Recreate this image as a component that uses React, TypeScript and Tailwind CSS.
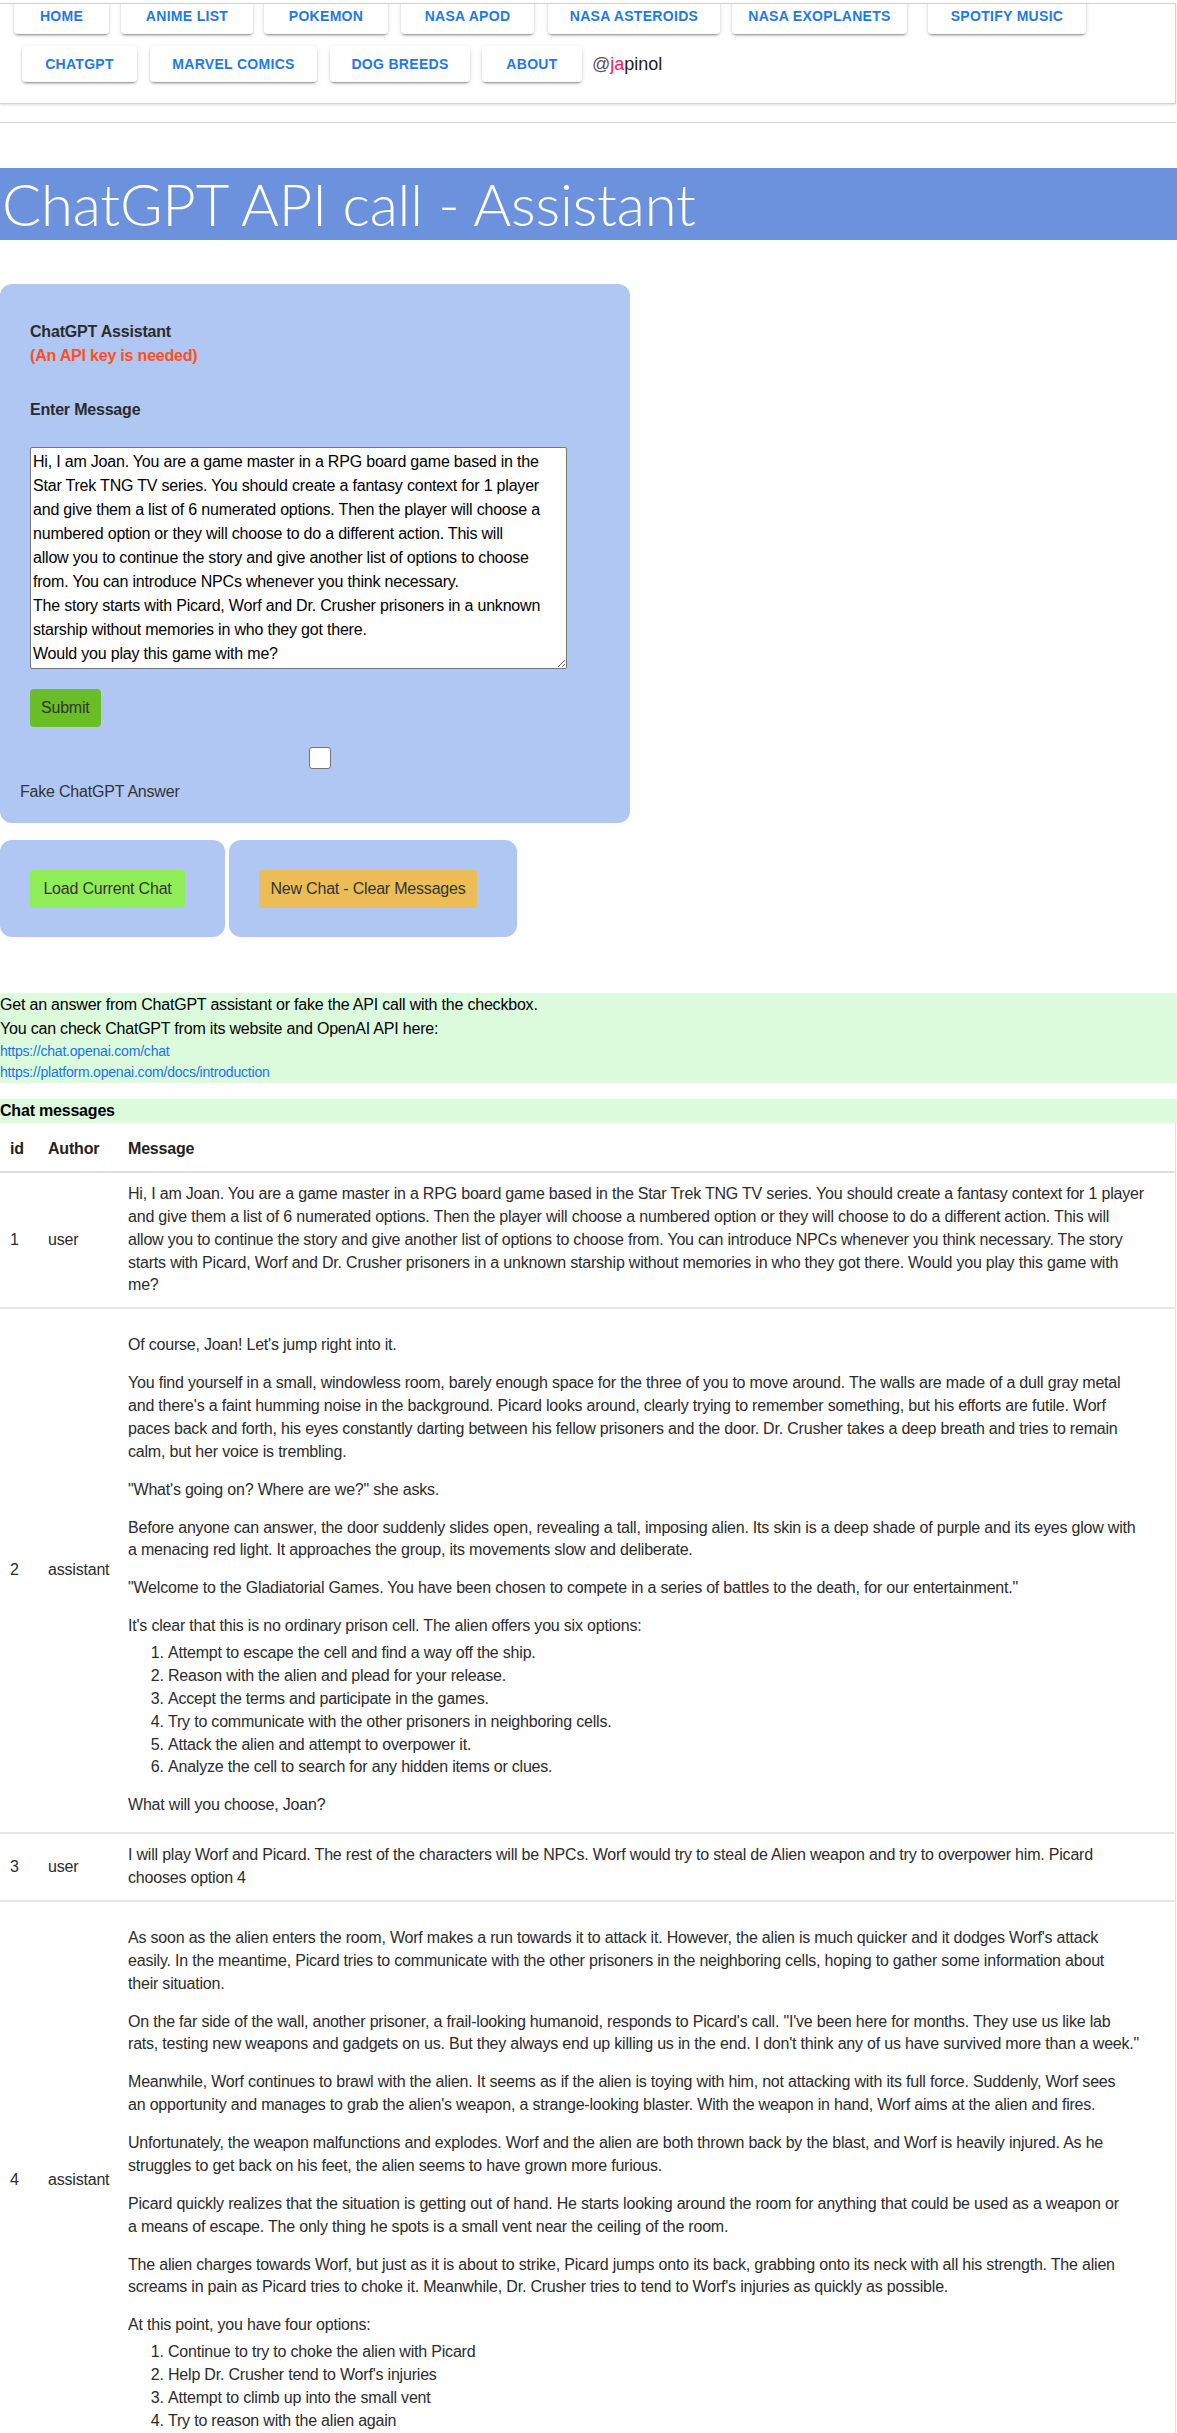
import React from "react";

const NAV_BTN =
  "h-[36px] shrink-0 flex items-center justify-center rounded-[4px] bg-white text-[14px] font-semibold uppercase tracking-[0.3px] text-[#1f7ae0] shadow-[0_3px_1px_-2px_rgba(0,0,0,0.2),0_2px_2px_0_rgba(0,0,0,0.14),0_1px_5px_0_rgba(0,0,0,0.12)]";

function NavBtn({ label, cls }: { label: string; cls: string }) {
  return <div className={`${NAV_BTN} ${cls}`}>{label}</div>;
}

const TEXTAREA_VALUE = [
  "Hi, I am Joan. You are a game master in a RPG board game based in the",
  "Star Trek TNG TV series. You should create a fantasy context for 1 player",
  "and give them a list of 6 numerated options. Then the player will choose a",
  "numbered option or they will choose to do a different action. This will",
  "allow you to continue the story and give another list of options to choose",
  "from. You can introduce NPCs whenever you think necessary.",
  "The story starts with Picard, Worf and Dr. Crusher prisoners in a unknown",
  "starship without memories in who they got there.",
  "Would you play this game with me?",
].join("\n");

type Block = { p: string[] } | { ol: string[] };

const row1 = [
  "Hi, I am Joan. You are a game master in a RPG board game based in the Star Trek TNG TV series. You should create a fantasy context for 1 player",
  "and give them a list of 6 numerated options. Then the player will choose a numbered option or they will choose to do a different action. This will",
  "allow you to continue the story and give another list of options to choose from. You can introduce NPCs whenever you think necessary. The story",
  "starts with Picard, Worf and Dr. Crusher prisoners in a unknown starship without memories in who they got there. Would you play this game with",
  "me?",
];

const row2: Block[] = [
  { p: ["Of course, Joan! Let's jump right into it."] },
  {
    p: [
      "You find yourself in a small, windowless room, barely enough space for the three of you to move around. The walls are made of a dull gray metal",
      "and there's a faint humming noise in the background. Picard looks around, clearly trying to remember something, but his efforts are futile. Worf",
      "paces back and forth, his eyes constantly darting between his fellow prisoners and the door. Dr. Crusher takes a deep breath and tries to remain",
      "calm, but her voice is trembling.",
    ],
  },
  { p: ["\"What's going on? Where are we?\" she asks."] },
  {
    p: [
      "Before anyone can answer, the door suddenly slides open, revealing a tall, imposing alien. Its skin is a deep shade of purple and its eyes glow with",
      "a menacing red light. It approaches the group, its movements slow and deliberate.",
    ],
  },
  {
    p: [
      "\"Welcome to the Gladiatorial Games. You have been chosen to compete in a series of battles to the death, for our entertainment.\"",
    ],
  },
  { p: ["It's clear that this is no ordinary prison cell. The alien offers you six options:"] },
  {
    ol: [
      "Attempt to escape the cell and find a way off the ship.",
      "Reason with the alien and plead for your release.",
      "Accept the terms and participate in the games.",
      "Try to communicate with the other prisoners in neighboring cells.",
      "Attack the alien and attempt to overpower it.",
      "Analyze the cell to search for any hidden items or clues.",
    ],
  },
  { p: ["What will you choose, Joan?"] },
];

const row3 = [
  "I will play Worf and Picard. The rest of the characters will be NPCs. Worf would try to steal de Alien weapon and try to overpower him. Picard",
  "chooses option 4",
];

const row4: Block[] = [
  {
    p: [
      "As soon as the alien enters the room, Worf makes a run towards it to attack it. However, the alien is much quicker and it dodges Worf's attack",
      "easily. In the meantime, Picard tries to communicate with the other prisoners in the neighboring cells, hoping to gather some information about",
      "their situation.",
    ],
  },
  {
    p: [
      "On the far side of the wall, another prisoner, a frail-looking humanoid, responds to Picard's call. \"I've been here for months. They use us like lab",
      "rats, testing new weapons and gadgets on us. But they always end up killing us in the end. I don't think any of us have survived more than a week.\"",
    ],
  },
  {
    p: [
      "Meanwhile, Worf continues to brawl with the alien. It seems as if the alien is toying with him, not attacking with its full force. Suddenly, Worf sees",
      "an opportunity and manages to grab the alien's weapon, a strange-looking blaster. With the weapon in hand, Worf aims at the alien and fires.",
    ],
  },
  {
    p: [
      "Unfortunately, the weapon malfunctions and explodes. Worf and the alien are both thrown back by the blast, and Worf is heavily injured. As he",
      "struggles to get back on his feet, the alien seems to have grown more furious.",
    ],
  },
  {
    p: [
      "Picard quickly realizes that the situation is getting out of hand. He starts looking around the room for anything that could be used as a weapon or",
      "a means of escape. The only thing he spots is a small vent near the ceiling of the room.",
    ],
  },
  {
    p: [
      "The alien charges towards Worf, but just as it is about to strike, Picard jumps onto its back, grabbing onto its neck with all his strength. The alien",
      "screams in pain as Picard tries to choke it. Meanwhile, Dr. Crusher tries to tend to Worf's injuries as quickly as possible.",
    ],
  },
  { p: ["At this point, you have four options:"] },
  {
    ol: [
      "Continue to try to choke the alien with Picard",
      "Help Dr. Crusher tend to Worf's injuries",
      "Attempt to climb up into the small vent",
      "Try to reason with the alien again",
    ],
  },
];

function Lines({ lines }: { lines: string[] }) {
  return (
    <>
      {lines.map((l, i) => (
        <span key={i} className="block whitespace-nowrap">
          {l}
        </span>
      ))}
    </>
  );
}

function Blocks({ blocks }: { blocks: Block[] }) {
  return (
    <div className="pt-[15px]">
      {blocks.map((b, i) => {
        const last = i === blocks.length - 1;
        if ("p" in b) {
          return (
            <p key={i} className={`${i > 0 ? "mt-[15px]" : ""} ${last ? "mb-[5px]" : ""}`}>
              <Lines lines={b.p} />
            </p>
          );
        }
        return (
          <ol key={i} className={`list-decimal pl-[40px] mt-[4px] ${last ? "mb-[16px]" : ""}`}>
            {b.ol.map((li, j) => (
              <li key={j}>{li}</li>
            ))}
          </ol>
        );
      })}
    </div>
  );
}

const TD = "px-[10px] py-[10px] align-middle";

export default function App() {
  return (
    <div className="w-[1177px] bg-white text-[16px] text-[#222] font-['Segoe_UI','Liberation_Sans',Arial,sans-serif] tracking-[-0.2px]">
      {/* top nav */}
      <div className="h-[3px]" />
      <div className="h-[101px] overflow-hidden border-t border-b border-r border-[#d2d2d2] shadow-[0_1px_2px_rgba(0,0,0,0.12)] w-[1176px]">
        <div className="flex -mt-[6px] pl-[14px]">
          <NavBtn label="Home" cls="w-[95px]" />
          <NavBtn label="Anime List" cls="w-[132px] ml-[12px]" />
          <NavBtn label="Pokemon" cls="w-[124px] ml-[11px]" />
          <NavBtn label="Nasa Apod" cls="w-[133px] ml-[13px]" />
          <NavBtn label="Nasa Asteroids" cls="w-[172px] ml-[14px]" />
          <NavBtn label="Nasa Exoplanets" cls="w-[175px] ml-[12px]" />
          <NavBtn label="Spotify Music" cls="w-[158px] ml-[21px]" />
        </div>
        <div className="flex items-center mt-[12px] pl-[22px]">
          <NavBtn label="ChatGPT" cls="w-[115px]" />
          <NavBtn label="Marvel Comics" cls="w-[167px] ml-[13px]" />
          <NavBtn label="Dog Breeds" cls="w-[140px] ml-[13px]" />
          <NavBtn label="About" cls="w-[100px] ml-[12px]" />
          <span className="ml-[10px] text-[18px] tracking-normal text-[#222]">
            <span className="text-[#555]">@</span>
            <span className="text-[#e8245a]">ja</span>
            pinol
          </span>
        </div>
      </div>
      <div className="mt-[18px] border-t border-[#d2d2d2] w-[1176px]" />

      {/* title */}
      <h1 className="mt-[45px] h-[72px] bg-[#6d92dd] text-white pl-[2px] font-['Lato','Roboto',sans-serif] font-light text-[58px] leading-[72px] tracking-[-0.2px] whitespace-nowrap overflow-hidden">
        ChatGPT API call - Assistant
      </h1>

      {/* form panel */}
      <div className="mt-[44px] w-[630px] h-[539px] rounded-[12px] bg-[#b0c7f4] pl-[30px] pt-[36px] leading-[24px]">
        <div className="font-bold text-[#2b2b2b]">ChatGPT Assistant</div>
        <div className="font-bold text-[#ff4f1f]">(An API key is needed)</div>
        <div className="mt-[30px] font-bold text-[#2b2b2b]">Enter Message</div>
        <textarea
          defaultValue={TEXTAREA_VALUE}
          wrap="off"
          spellCheck={false}
          className="mt-[25px] block w-[537px] h-[222px] bg-white border border-[#767676] rounded-[2px] px-[2px] py-[2px] text-[16px] leading-[24px] text-black whitespace-pre overflow-hidden resize-y"
        />
        <button className="mt-[20px] block h-[38px] px-[11px] rounded-[4px] bg-[#69bd27] text-[#333]">
          Submit
        </button>
        <input
          type="checkbox"
          className="mt-[20px] ml-[279px] block appearance-none w-[22px] h-[22px] bg-white border border-[#767676] rounded-[3px]"
        />
        <div className="mt-[11px] -ml-[10px] text-[#333]">Fake ChatGPT Answer</div>
      </div>

      {/* second row */}
      <div className="mt-[17px] flex gap-[4px]">
        <div className="w-[225px] h-[97px] rounded-[12px] bg-[#b0c7f4] pl-[30px] pt-[30px]">
          <button className="h-[38px] w-[155px] rounded-[4px] bg-[#8fee57] text-[#333]">
            Load Current Chat
          </button>
        </div>
        <div className="w-[288px] h-[97px] rounded-[12px] bg-[#b0c7f4] pl-[30px] pt-[30px]">
          <button className="h-[38px] w-[218px] rounded-[4px] bg-[#ecbd56] text-[#333]">
            New Chat - Clear Messages
          </button>
        </div>
      </div>

      {/* info */}
      <div className="mt-[56px] bg-[#dcfbdc] text-black">
        <div className="leading-[24px]">Get an answer from ChatGPT assistant or fake the API call with the checkbox.</div>
        <div className="leading-[24px]">You can check ChatGPT from its website and OpenAI API here:</div>
        <div className="text-[14px] leading-[21px] text-[#1a73e8]">https://chat.openai.com/chat</div>
        <div className="text-[14px] leading-[21px] text-[#1a73e8]">https://platform.openai.com/docs/introduction</div>
      </div>

      <div className="mt-[16px] bg-[#dcfbdc] font-bold text-black leading-[24px]">Chat messages</div>

      {/* table */}
      <table className="w-[1176px] table-fixed border-collapse border-r border-[#e0e0e0] leading-[1.43] text-[#2b2b2b]">
        <colgroup>
          <col className="w-[38px]" />
          <col className="w-[80px]" />
          <col />
        </colgroup>
        <thead>
          <tr className="border-b-2 border-[#e0e0e0] text-[#222]">
            <th className="px-[10px] pt-[15px] pb-[10px] text-left font-bold">id</th>
            <th className="px-[10px] pt-[15px] pb-[10px] text-left font-bold">Author</th>
            <th className="px-[10px] pt-[15px] pb-[10px] text-left font-bold">Message</th>
          </tr>
        </thead>
        <tbody>
          <tr className="border-b-2 border-[#e6e6e6]">
            <td className={TD}>1</td>
            <td className={TD}>user</td>
            <td className={TD}>
              <Lines lines={row1} />
            </td>
          </tr>
          <tr className="border-b-2 border-[#e6e6e6]">
            <td className={TD}>2</td>
            <td className={TD}>assistant</td>
            <td className={TD}>
              <Blocks blocks={row2} />
            </td>
          </tr>
          <tr className="border-b-2 border-[#e6e6e6]">
            <td className={TD}>3</td>
            <td className={TD}>user</td>
            <td className={TD}>
              <Lines lines={row3} />
            </td>
          </tr>
          <tr className="border-b-2 border-[#e6e6e6]">
            <td className={TD}>4</td>
            <td className={TD}>assistant</td>
            <td className={TD}>
              <Blocks blocks={row4} />
            </td>
          </tr>
        </tbody>
      </table>
    </div>
  );
}
